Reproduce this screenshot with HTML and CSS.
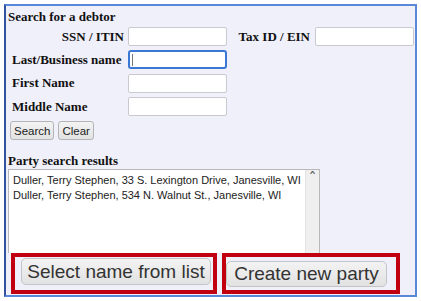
FILE: index.html
```html
<html>
<head>
<meta charset="utf-8">
<link rel="stylesheet" href="styles.css">
</head>
<body>
<div class="frame">
	<div class="title">Search for a debtor</div>
	<div class="search">
		<div class="label right">SSN / ITIN</div>
		<input type="text" class="field">
		<div class="label right tax">Tax ID / EIN</div>
		<input type="text" class="field">

		<div class="label">Last/Business name</div>
		<input type="text" class="field focused">
		<div></div><div></div>

		<div class="label">First Name</div>
		<input type="text" class="field">
		<div></div><div></div>

		<div class="label">Middle Name</div>
		<input type="text" class="field">
	</div>
	<div class="actions">
		<button class="small">Search</button>
		<button class="small">Clear</button>
	</div>
	<div class="title results_title">Party search results</div>
	<div class="results">
		<div class="rows">
			<div class="row">Duller, Terry Stephen, 33 S. Lexington Drive, Janesville, WI</div>
			<div class="row">Duller, Terry Stephen, 534 N. Walnut St., Janesville, WI</div>
		</div>
		<div class="scroll"><span class="arrow">&#710;</span></div>
	</div>
	<div class="choices">
		<div class="mark mark_select"><button class="big select">Select name from list</button></div>
		<div class="mark mark_create"><button class="big create">Create new party</button></div>
	</div>
</div>
</body>
</html>
```

FILE: styles.css
```css
body {
	margin: 0;
	background-color: white;
}
.frame {
	margin: 4px;
	height: 293px;
	box-sizing: border-box;
	border: 2px solid #5a88d8;
	border-left-color: #33549c;
	background-color: #f0f0fa;
	padding: 3px 0 0 2px;
	overflow: hidden;
}
.title {
	font-family: "Liberation Serif", serif;
	font-weight: bold;
	font-size: 13px;
	line-height: 16px;
	color: #111;
}

.search {
	display: grid;
	grid-template-columns: 120px 99px 88px 99px;
	grid-auto-rows: 23.3px;
	align-items: center;
}
.label {
	font-family: "Liberation Serif", serif;
	font-weight: bold;
	font-size: 13px;
	color: #111;
	padding: 0 4px;
}
.right {
	text-align: right;
}
.tax {
	padding-right: 5px;
}
.field {
	width: 99px;
	height: 19px;
	box-sizing: border-box;
	border: 1px solid #c9c9cf;
	border-radius: 2px;
	background-color: white;
	margin: 0;
}
.focused {
	border: 2px solid #3b78d4;
	border-radius: 3px;
	background-image: linear-gradient(#777, #777);
	background-size: 1px 12px;
	background-position: 2px 50%;
	background-repeat: no-repeat;
}

.actions {
	display: flex;
	gap: 4px;
	margin: 3px 0 0 2px;
}
button {
	font-family: "Liberation Sans", sans-serif;
	background: linear-gradient(#f3f3f3, #e2e2e2);
	border: 1px solid #b4b4b8;
	border-radius: 3px;
	color: #222;
	padding: 0;
}
.small {
	font-size: 11.5px;
	height: 19px;
	padding: 0 3px;
}

.results_title {
	margin-top: 13px;
}
.results {
	display: flex;
	width: 312px;
	height: 84px;
	box-sizing: border-box;
	border: 1px solid #b8b8b8;
	border-bottom: none;
	background-color: white;
}
.rows {
	flex: 1;
	padding: 3px 4px;
	font-family: "Liberation Sans", sans-serif;
	font-size: 11px;
	line-height: 15px;
	color: #222;
}
.row {
	white-space: nowrap;
}
.scroll {
	width: 15px;
	background-color: #efefef;
	border-left: 1px solid #e2e2e2;
	text-align: center;
}
.arrow {
	font-family: "DejaVu Sans", sans-serif;
	font-size: 16px;
	line-height: 18px;
	color: #555;
}

.choices {
	display: flex;
	gap: 5px;
	margin-left: 3px;
}
.mark {
	border: 4px solid #c00010;
	box-sizing: border-box;
	height: 41px;
	display: flex;
}
.mark_select {
	width: 206px;
	padding: 1px 2px 0 6px;
	align-items: flex-start;
}
.mark_create {
	width: 178px;
	padding: 4px 9px 0 0;
	align-items: flex-start;
}
.big {
	font-size: 19px;
	height: 27px;
	color: #333;
	border-radius: 5px;
	border-color: #c4c4c8;
}
.select {
	width: 190px;
}
.create {
	width: 164px;
	height: 26px;
}
```
